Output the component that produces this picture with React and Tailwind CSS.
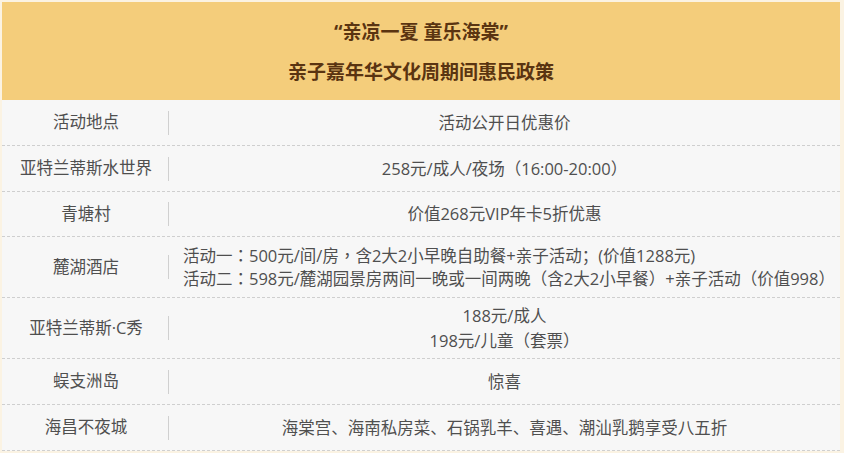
import React from "react";

const rows = [
  { name: "活动地点", h: "h-[46px]", lines: ["活动公开日优惠价"] },
  { name: "亚特兰蒂斯水世界", h: "h-[46px]", lines: ["258元/成人/夜场（16:00-20:00）"] },
  { name: "青塘村", h: "h-[45px]", lines: ["价值268元VIP年卡5折优惠"] },
  {
    name: "麓湖酒店",
    h: "h-[61px]",
    left: true,
    lines: [
      "活动一：500元/间/房，含2大2小早晚自助餐+亲子活动；(价值1288元)",
      "活动二：598元/麓湖园景房两间一晚或一间两晚（含2大2小早餐）+亲子活动（价值998）",
    ],
  },
  { name: "亚特兰蒂斯·C秀", h: "h-[61px]", lines: ["188元/成人", "198元/儿童（套票）"] },
  { name: "蜈支洲岛", h: "h-[46px]", lines: ["惊喜"] },
  { name: "海昌不夜城", h: "h-[46px]", lines: ["海棠宫、海南私房菜、石锅乳羊、喜遇、潮汕乳鹅享受八五折"] },
];

// fullwidth brackets / colon / comma sit centred in the reference font
function Text({ children }) {
  return children.split(/([（）：，])/).map((part, i) =>
    /^[（）：，]$/.test(part) ? (
      <span key={i} style={{ fontFamily: "'Noto Sans CJK TC', sans-serif" }}>
        {part}
      </span>
    ) : (
      part
    )
  );
}

function Row({ name, h, lines, left }) {
  return (
    <div className={`flex ${h} items-center border-b border-dashed border-[#cfcfcf] bg-[#f7f7f7]`}>
      <div className="flex w-[166px] shrink-0 justify-center pl-[2px]">{name}</div>
      <div className="h-[24px] w-px bg-[#d0d0d0]" />
      <div className={left ? "flex-1 pl-[14px] leading-[23px]" : "flex-1 text-center leading-[24px]"}>
        {lines.map((l) => (
          <div key={l} className="whitespace-nowrap">
            <Text>{l}</Text>
          </div>
        ))}
      </div>
    </div>
  );
}

export default function App() {
  return (
    <div
      className="h-[453px] w-[844px] overflow-hidden bg-[#fbf3e3] pt-[2px] pl-[2px] pr-[4px] text-[16.5px] text-[#4f4f4f] [text-spacing-trim:space-all]"
      style={{ fontFamily: "'Open Sans', 'Noto Sans CJK SC', sans-serif" }}
    >
      <div className="flex h-[98px] flex-col items-center bg-[#f4cd7b] pt-[10px] text-[19px] font-bold text-[#5a3411]">
        <div className="leading-[40px]">“亲凉一夏 童乐海棠”</div>
        <div className="leading-[40px]">亲子嘉年华文化周期间惠民政策</div>
      </div>
      {rows.map((r) => (
        <Row key={r.name} {...r} />
      ))}
    </div>
  );
}
